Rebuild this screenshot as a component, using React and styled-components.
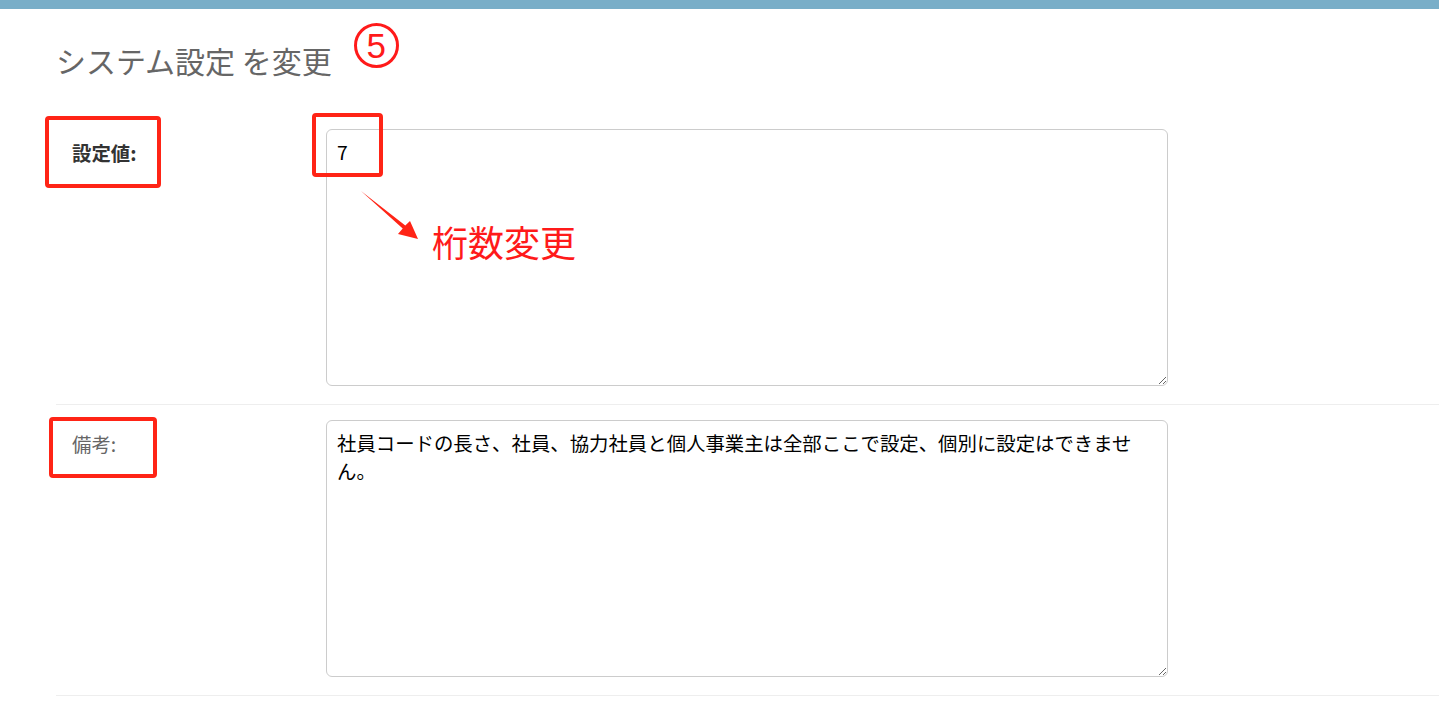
import styled, { createGlobalStyle } from "styled-components";

const GlobalStyle = createGlobalStyle`
    body {
        margin: 0;
        background: #fff;
        font-family: "Noto Sans CJK JP", "Noto Sans", sans-serif;
    }
`;

// annotation boxes are drawn over the label, offsets relative to it
const fields = [
    {
        label: "設定値:",
        strong: true,
        value: "7",
        mark: { left: -27, top: -13, w: 116, h: 72 },
        note: true,
    },
    {
        label: "備考:",
        strong: false,
        value: "社員コードの長さ、社員、協力社員と個人事業主は全部ここで設定、個別に設定はできません。",
        mark: { left: -23, top: -3, w: 108, h: 61 },
        note: false,
    },
];

const App = () => {
    return (
        <>
            <GlobalStyle />
            <TopBar />
            <Content>
                <TitleRow>
                    <Title>システム設定 を変更</Title>
                    <StepBadge>5</StepBadge>
                </TitleRow>
                {fields.map((f) => (
                    <Row key={f.label}>
                        <Label $strong={f.strong}>
                            {f.label}
                            <Mark $left={f.mark.left} $top={f.mark.top} $w={f.mark.w} $h={f.mark.h} />
                        </Label>
                        <FieldBox>
                            <TextArea defaultValue={f.value} />
                            {f.note && (
                                <>
                                    <Mark $left={-14} $top={-16} $w={71} $h={64} />
                                    <Arrow width="60" height="52" viewBox="0 0 60 52">
                                        <polygon points="1,2 45.3,36.5 50,32 58,50 38,45 42.7,39.5" fill="#ff2416" />
                                    </Arrow>
                                    <NoteText>桁数変更</NoteText>
                                </>
                            )}
                        </FieldBox>
                    </Row>
                ))}
            </Content>
        </>
    );
};

export default App;

const TopBar = styled.div`
    height: 9px;
    background-color: #79aec8;
`;

const Content = styled.div`
    padding-left: 56px;
`;

const TitleRow = styled.div`
    display: flex;
    align-items: flex-start;
    height: 105px;
`;

const Title = styled.h1`
    margin: 31px 0 0 0;
    font-size: 30px;
    line-height: 40px;
    font-weight: 400;
    color: #666;
`;

const StepBadge = styled.span`
    margin: 14px 0 0 22px;
    width: 45px;
    height: 45px;
    box-sizing: border-box;
    border: 3px solid #ff1a1a;
    border-radius: 50%;
    display: flex;
    align-items: center;
    justify-content: center;
    color: #ff1a1a;
    font-family: "Liberation Sans", sans-serif;
    font-size: 35px;
    line-height: 1;
`;

const Row = styled.div`
    display: flex;
    padding: 15px 0 18px 16px;
    border-bottom: 1px solid #eee;
`;

const Label = styled.label`
    position: relative;
    width: 254px;
    flex-shrink: 0;
    padding-top: 10px;
    font-size: 19.4px;
    line-height: 28px;
    height: 28px;
    font-weight: ${(p) => (p.$strong ? 700 : 400)};
    color: ${(p) => (p.$strong ? "#333" : "#666")};
`;

const Mark = styled.span`
    position: absolute;
    left: ${(p) => p.$left}px;
    top: ${(p) => p.$top}px;
    width: ${(p) => p.$w}px;
    height: ${(p) => p.$h}px;
    box-sizing: border-box;
    border: 4px solid #ff2416;
    border-radius: 4px;
    pointer-events: none;
`;

const FieldBox = styled.div`
    position: relative;
`;

const TextArea = styled.textarea`
    display: block;
    width: 842px;
    height: 257px;
    box-sizing: border-box;
    margin: 0;
    padding: 8px 10px;
    border: 1px solid #ccc;
    border-radius: 6px;
    font-family: "Noto Sans CJK JP", "Noto Sans", sans-serif;
    font-size: 19.4px;
    line-height: 28px;
    color: #000;
    background: #fff;
    outline: none;
`;

const Arrow = styled.svg`
    position: absolute;
    left: 34px;
    top: 60px;
`;

const NoteText = styled.span`
    position: absolute;
    left: 106px;
    top: 94px;
    font-size: 36px;
    line-height: 1;
    color: #ff1a1a;
    white-space: nowrap;
`;
